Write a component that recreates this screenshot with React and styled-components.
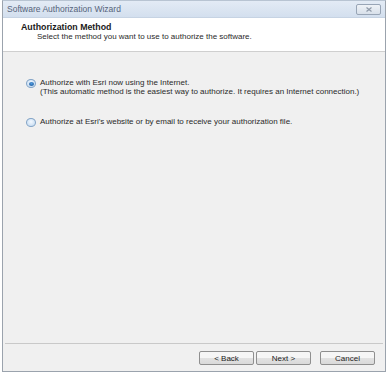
import React from 'react';
import styled, { createGlobalStyle } from 'styled-components';

const Global = createGlobalStyle`
  html, body {
    margin: 0;
    padding: 0;
    background: #ffffff;
  }
  body {
    font-family: 'Liberation Sans', Arial, sans-serif;
    font-size: 8px;
    color: #2a2a2a;
  }
`;

////////// window //////////

const Window = styled.div`
  margin-left: 2px;
  width: 384px;
  height: 372px;
  box-sizing: border-box;
  border: 1px solid #9ba3ad;
  border-top-color: #b8c4d2;
  display: flex;
  flex-direction: column;
  background: #f0f0f0;
`;

////////// title bar //////////

const TitleBar = styled.div`
  height: 16px;
  flex: none;
  display: flex;
  align-items: center;
  justify-content: space-between;
  padding: 0 4px 0 4px;
  background: linear-gradient(#e3ebf5, #d3dfee);
  border-bottom: 1px solid #c6d3e3;
`;

const TitleText = styled.span`
  color: #55637a;
  font-size: 8.5px;
`;

const CloseButton = styled.div`
  width: 23px;
  height: 9px;
  border: 1px solid #98a5b6;
  border-radius: 2px;
  background: linear-gradient(#eef2f7, #d8e0ea);
  display: flex;
  align-items: center;
  justify-content: center;
  margin-top: 1px;
`;

const CloseIcon = () => (
  <svg width="8" height="5" viewBox="0 0 8 5">
    <path d="M1.5 0.5 L6.5 4.5 M6.5 0.5 L1.5 4.5" stroke="#8e99a8" strokeWidth="1.2" />
  </svg>
);

////////// header //////////

const Header = styled.div`
  height: 34px;
  flex: none;
  background: #ffffff;
  border-bottom: 1px solid #cfcfcf;
  box-sizing: border-box;
  padding: 4px 0 0 18px;
`;

const HeaderTitle = styled.div`
  font-weight: 700;
  font-size: 8.8px;
  line-height: 10px;
  color: #1a1a1a;
`;

const HeaderSub = styled.div`
  padding-left: 16px;
  line-height: 10px;
`;

////////// body //////////

const Body = styled.div`
  flex: 1;
  padding: 27px 0 0 23px;
  display: flex;
  flex-direction: column;
  gap: 22px;
`;

const Option = styled.div`
  display: flex;
  align-items: flex-start;
  gap: 4px;
`;

const Radio = styled.span`
  width: 10px;
  height: 9px;
  flex: none;
  border-radius: 50%;
  box-sizing: border-box;
  border: 1px solid #82a3c6;
  background: radial-gradient(circle at 50% 40%, #f4f9ff, #bcd6ef);
  display: flex;
  align-items: center;
  justify-content: center;
  &::after {
    content: '';
    display: ${p => (p.checked ? 'block' : 'none')};
    width: 5px;
    height: 4px;
    border-radius: 50%;
    background: radial-gradient(circle at 50% 35%, #4f9be0, #164f8f);
  }
`;

const OptionText = styled.div`
  line-height: 8.5px;
`;

////////// footer //////////

const Footer = styled.div`
  flex: none;
  height: 28px;
  box-sizing: border-box;
  margin: 0 2px;
  border-top: 1px solid #c9c9c9;
  display: flex;
  justify-content: flex-end;
  align-items: flex-start;
  padding: 7px 8px 0 0;
  gap: 2px;
`;

const Button = styled.div`
  width: 53px;
  height: 12px;
  border: 1px solid #8f8f8f;
  border-radius: 2px;
  background: linear-gradient(#f6f6f6 50%, #e2e2e2 50%, #d9d9d9);
  display: flex;
  align-items: center;
  justify-content: center;
  font-size: 8px;
  color: #222;
  margin-left: ${p => (p.spaced ? '7px' : '0')};
`;

const App = () => (
  <>
    <Global />
    <Window>
      <TitleBar>
        <TitleText>Software Authorization Wizard</TitleText>
        <CloseButton>
          <CloseIcon />
        </CloseButton>
      </TitleBar>
      <Header>
        <HeaderTitle>Authorization Method</HeaderTitle>
        <HeaderSub>Select the method you want to use to authorize the software.</HeaderSub>
      </Header>
      <Body>
        <Option>
          <Radio checked />
          <OptionText>
            Authorize with Esri now using the Internet.
            <br />
            (This automatic method is the easiest way to authorize. It requires an Internet connection.)
          </OptionText>
        </Option>
        <Option>
          <Radio />
          <OptionText>Authorize at Esri's website or by email to receive your authorization file.</OptionText>
        </Option>
      </Body>
      <Footer>
        <Button>&lt; Back</Button>
        <Button>Next &gt;</Button>
        <Button spaced>Cancel</Button>
      </Footer>
    </Window>
  </>
);

export default App;
